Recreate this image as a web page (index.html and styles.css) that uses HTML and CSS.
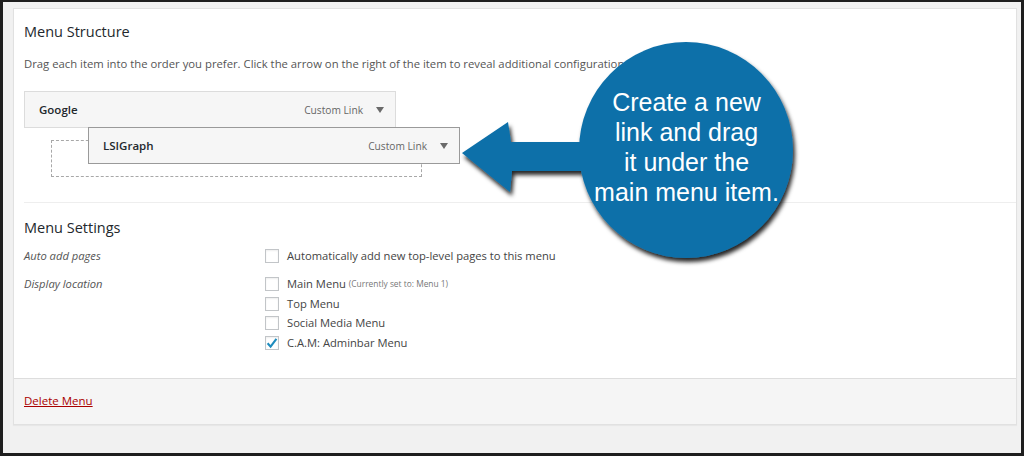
FILE: index.html
```html
<!DOCTYPE html>
<html lang="en">
<head>
<meta charset="utf-8"/>
<meta content="width=device-width, initial-scale=1.0" name="viewport"/>
<title>Menu Structure</title>
<link rel="stylesheet" href="styles.css">
</head>
<body>
<div class="shot">
  <div class="frame">
    <div class="panel">
      <div class="panel-body">
        <h3>Menu Structure</h3>
        <p class="desc">Drag each item into the order you prefer. Click the arrow on the right of the item to reveal additional configuration options.</p>

        <div class="menu-list">
          <div class="menu-item">
            <span class="item-title">Google</span>
            <span class="item-type">Custom Link</span>
            <span class="item-arrow"></span>
          </div>
          <div class="placeholder"></div>
          <div class="menu-item dragging">
            <span class="item-title">LSIGraph</span>
            <span class="item-type">Custom Link</span>
            <span class="item-arrow"></span>
          </div>
        </div>

        <div class="settings">
          <h3>Menu Settings</h3>
          <div class="row">
            <div class="row-label">Auto add pages</div>
            <div class="row-options">
              <label class="check"><span class="box"></span>Automatically add new top-level pages to this menu</label>
            </div>
          </div>
          <div class="row">
            <div class="row-label">Display location</div>
            <div class="row-options">
              <label class="check"><span class="box"></span>Main Menu <small>(Currently set to: Menu 1)</small></label>
              <label class="check"><span class="box"></span>Top Menu</label>
              <label class="check"><span class="box"></span>Social Media Menu</label>
              <label class="check"><span class="box checked"><svg viewBox="0 0 14 14" width="14" height="14"><path d="M2.6 7.2 L5.6 10.6 L11.4 2.8" fill="none" stroke="#1e8cbe" stroke-width="2.1"/></svg></span>C.A.M: Adminbar Menu</label>
            </div>
          </div>
        </div>
      </div>
      <div class="panel-footer">
        <a href="#" class="delete">Delete Menu</a>
      </div>
    </div>
  </div>

  <!-- callout drawn over the screenshot -->
  <svg class="callout" viewBox="440 30 380 250" width="380" height="250">
    <defs>
      <filter id="shadow" x="-10%" y="-10%" width="130%" height="130%">
        <feDropShadow dx="2" dy="4" stdDeviation="2" flood-color="#000" flood-opacity="0.85"/>
      </filter>
    </defs>
    <g filter="url(#shadow)" fill="#0f70a9">
      <path d="M462 153 L508 122 L511 142 L610 142 L610 171 L512 171 L510 192 Z"/>
      <ellipse cx="686" cy="150" rx="107" ry="108"/>
    </g>
  </svg>
  <div class="callout-text">Create a new<br>link and drag<br>it under the<br>main menu item.</div>
</div>
</body>
</html>
```

FILE: styles.css
```css
* {
  box-sizing: border-box;
}
body {
  margin: 0;
  font-family: "Open Sans", "Noto Sans", sans-serif;
  color: #444;
}
.shot {
  position: relative;
  width: 1024px;
  height: 456px;
  overflow: hidden;
}
.frame {
  width: 1024px;
  height: 456px;
  background: #f1f1f1;
  border-style: solid;
  border-color: #1e1e1e;
  border-width: 2px 3px 3px 3px;
  padding: 6px 4px 0 10px;
}
.panel {
  background: #fff;
  border: 1px solid #e1e1e1;
  box-shadow: 0 1px 1px rgba(0,0,0,0.04);
}
.panel-body {
  padding: 13px 0 0 10px;
  height: 369px;
}
h3 {
  margin: 0;
  font-size: 14.5px;
  line-height: 20px;
  font-weight: 400;
  color: #23282d;
}
.desc {
  margin: 14px 0 0;
  font-size: 11.3px;
  line-height: 16px;
  color: #555;
  white-space: nowrap;
}
.menu-list {
  position: relative;
  margin-top: 19px;
}
.menu-item {
  display: flex;
  align-items: center;
  width: 372px;
  height: 37px;
  padding: 0 11px 0 14px;
  background: #f6f6f6;
  border: 1px solid #dcdcdc;
}
.item-title {
  flex: 1;
  font-size: 11.5px;
  font-weight: 600;
  color: #23282d;
}
.item-type {
  font-size: 10.2px;
  color: #666;
  margin-right: 13px;
}
.item-arrow {
  width: 0;
  height: 0;
  border-left: 4px solid transparent;
  border-right: 4px solid transparent;
  border-top: 6px solid #6a6a6a;
}
.placeholder {
  width: 371px;
  height: 37px;
  margin: 12px 0 0 27px;
  border: 1px dashed #a8a8a8;
}
.menu-item.dragging {
  position: absolute;
  left: 64px;
  top: 36px;
  border-color: #9a9a9a;
}
.settings {
  margin-top: 25px;
  border-top: 1px solid #eee;
  padding-top: 15px;
}
.row {
  display: flex;
  margin-top: 8px;
}
.row + .row {
  margin-top: 8px;
}
.row-label {
  width: 241px;
  font-size: 11.2px;
  line-height: 20px;
  font-style: italic;
  color: #555;
}
.row-options {
  display: flex;
  flex-direction: column;
}
.check {
  display: flex;
  align-items: center;
  font-size: 11.2px;
  line-height: 19.7px;
  color: #444;
  white-space: pre;
}
.check small {
  font-size: 8.4px;
  color: #777;
}
.box {
  width: 14px;
  height: 14px;
  margin-right: 8px;
  border: 1px solid #c2c5c8;
  background: #fff;
  box-shadow: inset 0 1px 2px rgba(0,0,0,0.07);
}
.box svg {
  display: block;
  margin: -1px 0 0 -1px;
}
.panel-footer {
  display: flex;
  align-items: center;
  height: 46px;
  padding: 0 10px 3px;
  background: #f5f5f5;
  border-top: 1px solid #dddddd;
}
.delete {
  font-size: 11.5px;
  color: #a00;
  text-decoration: underline;
}
.callout {
  position: absolute;
  left: 440px;
  top: 30px;
}
.callout-text {
  position: absolute;
  left: 580px;
  top: 87px;
  width: 213px;
  text-align: center;
  font-family: "Liberation Sans", Arial, sans-serif;
  font-size: 25px;
  line-height: 30px;
  color: #fff;
}
```
